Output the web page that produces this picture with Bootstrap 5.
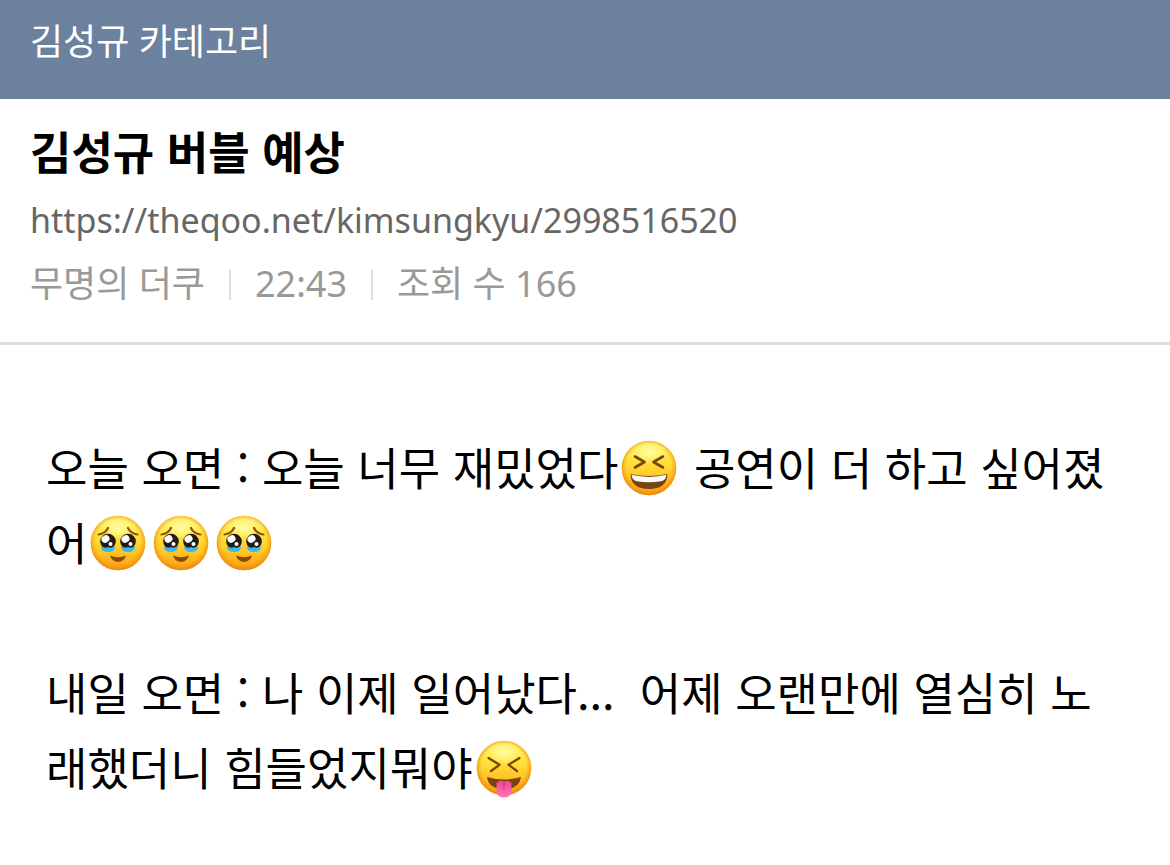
<!DOCTYPE html>
<html lang="ko">
<head>
<meta charset="utf-8">
<meta name="viewport" content="width=device-width, initial-scale=1">
<title>김성규 버블 예상</title>
<link href="https://cdn.jsdelivr.net/npm/bootstrap@5.3.0/dist/css/bootstrap.min.css" rel="stylesheet">
<style>
  body { font-family: "Noto Sans", "Noto Sans CJK KR", sans-serif; color: #000; background: #fff; }
  .board-bar { background: #6b819e; padding: 12px 30px 27px; }
  .board-bar a { font-size: 36px; line-height: 60px; color: #fff; }
  .post-head { padding: 22px 30px 28px; border-bottom: 3px solid #ddd; }
  .post-title, .post-body { font-family: "Noto Sans CJK KR", sans-serif; font-size: 45px; }
  .post-title { line-height: 60px; font-weight: 700; }
  .post-url { font-size: 34px; line-height: 60px; margin-top: 9px; }
  .post-url a { color: #666; }
  .post-meta { font-size: 36px; line-height: 60px; margin-top: 4px; color: #999; }
  .post-meta li + li::before { content: ""; display: inline-block; width: 2px; height: 30px; margin: 0 24px; background: #ddd; vertical-align: -3px; }
  .post-body { padding: 84px 46px 40px; line-height: 75px; word-break: break-all; }
  .post-body p { margin-bottom: 75px; }
  .emo { width: 57px; height: 58px; margin: 0 3px; vertical-align: -12px; }
</style>
</head>
<body>
<svg width="0" height="0" class="position-absolute" aria-hidden="true">
  <defs>
    <linearGradient id="skin" x1="0" y1="0" x2="0" y2="1">
      <stop offset="0" stop-color="#fff27a"/><stop offset=".3" stop-color="#ffe845"/><stop offset=".65" stop-color="#ffc727"/><stop offset="1" stop-color="#fd9a12"/>
    </linearGradient>
    <radialGradient id="rim" cx=".5" cy=".48" r=".52">
      <stop offset=".78" stop-color="#f29a12" stop-opacity="0"/><stop offset="1" stop-color="#e9830f" stop-opacity=".85"/>
    </radialGradient>
    <radialGradient id="shine" cx=".5" cy=".5" r=".5">
      <stop offset="0" stop-color="#ffffb4" stop-opacity=".9"/><stop offset="1" stop-color="#ffff90" stop-opacity="0"/>
    </radialGradient>
    <linearGradient id="tongue" x1="0" y1="0" x2="0" y2="1">
      <stop offset="0" stop-color="#f0468f"/><stop offset="1" stop-color="#ff78b4"/>
    </linearGradient>
    <symbol id="face" viewBox="0 0 57 58">
      <circle cx="28" cy="28" r="27.3" fill="url(#skin)"/>
      <ellipse cx="28" cy="13" rx="19" ry="12" fill="url(#shine)"/>
      <circle cx="28" cy="28" r="27.3" fill="url(#rim)"/>
    </symbol>
    <symbol id="grin" viewBox="0 0 57 58">
      <use href="#face" width="57" height="58"/>
      <path d="M14 16.5 L23.5 22 L14 27.5 M42 16.5 L32.5 22 L42 27.5" fill="none" stroke="#7a4508" stroke-width="2.6" stroke-linecap="round" stroke-linejoin="round"/>
      <path d="M9.5 34 Q28 38 46.500 34 Q46 49 28 49 Q10 49 9.500 34Z" fill="#774311"/>
      <path d="M10.5 34.8 Q28 39 45.500 34.8 Q45 40.500 40 41.300 Q28 43 16 41.300 Q11 40.500 10.500 34.8Z" fill="#f7f8fb"/>
    </symbol>
    <symbol id="tearful" viewBox="0 0 57 58">
      <use href="#face" width="57" height="58"/>
      <path d="M8.5 19.5 Q15.500 18.500 18 13 M38 13 Q40.500 18.500 47.500 19.500" fill="none" stroke="#94530c" stroke-width="2.2" stroke-linecap="round"/>
      <path d="M11 31 Q14 34 18 32.500 Q22 34 25 31 Q25 37 18 37 Q11 37 11 31Z M31 31 Q34 34 38 32.500 Q42 34 45 31 Q45 37 38 37 Q31 37 31 31Z" fill="#36b9f0"/>
      <circle cx="18" cy="26.5" r="7.8" fill="#241b19"/><circle cx="38" cy="26.5" r="7.8" fill="#241b19"/>
      <path d="M12 31.5 Q15 33.500 18 32 Q21 33.500 24 31.500 Q22 36 18 36 Q14 36 12 31.500Z M32 31.500 Q35 33.500 38 32 Q41 33.500 44 31.500 Q42 36 38 36 Q34 36 32 31.500Z" fill="#36b9f0"/>
      <g fill="#fff"><ellipse cx="15.5" cy="24" rx="4.2" ry="3.500" transform="rotate(-30 15.5 24)"/><ellipse cx="35.5" cy="24" rx="4.2" ry="3.500" transform="rotate(-30 35.5 24)"/><circle cx="20.5" cy="29" r="2"/><circle cx="40.5" cy="29" r="2"/></g>
      <path d="M20 40.5 Q28 44 36 40.500 Q34 47 28 47 Q22 47 20 40.500Z" fill="#8b4c0b"/>
    </symbol>
    <symbol id="squint" viewBox="0 0 57 58">
      <use href="#face" width="57" height="58"/>
      <path d="M12.5 18 L23.500 24.800 L15 31 M43.500 18 L32.500 24.800 L41 31" fill="none" stroke="#7a4508" stroke-width="2.2" stroke-linecap="round" stroke-linejoin="round"/>
      <path d="M11 37 Q28 42 45 37 Q43.500 49 28 49 Q12.500 49 11 37Z" fill="#774311"/>
      <path d="M20.5 43 Q24 39.500 28 41.500 Q32 39.500 35.500 43 V50 Q35.500 57.500 28 57.500 Q20.500 57.500 20.500 50Z" fill="url(#tongue)"/>
      <path d="M28 43 V49" stroke="#d92d79" stroke-width="1.2" stroke-linecap="round"/>
    </symbol>
  </defs>
</svg>

<header class="board-bar"><a href="#" class="d-block text-decoration-none">김성규 카테고리</a></header>
<main>
  <article>
    <div class="post-head">
      <h1 class="post-title mb-0">김성규 버블 예상</h1>
      <div class="post-url"><a href="https://theqoo.net/kimsungkyu/2998516520" class="text-decoration-none">https://theqoo.net/kimsungkyu/2998516520</a></div>
      <ul class="post-meta list-unstyled d-flex flex-wrap mb-0">
        <li>무명의 더쿠</li><li>22:43</li><li>조회 수 166</li>
      </ul>
    </div>
    <div class="post-body">
      <p>오늘 오면 : 오늘 너무 재밌었다<svg class="emo" role="img" aria-label="웃음"><use href="#grin"/></svg> 공연이 더 하고 싶어졌어<svg class="emo" role="img" aria-label="울먹"><use href="#tearful"/></svg><svg class="emo" role="img" aria-label="울먹"><use href="#tearful"/></svg><svg class="emo" role="img" aria-label="울먹"><use href="#tearful"/></svg></p>
      <p class="mb-0">내일 오면 : 나 이제 일어났다...&nbsp; 어제 오랜만에 열심히 노래했더니 힘들었지뭐야<svg class="emo" role="img" aria-label="메롱"><use href="#squint"/></svg></p>
    </div>
  </article>
</main>
<script src="https://cdn.jsdelivr.net/npm/bootstrap@5.3.0/dist/js/bootstrap.bundle.min.js"></script>
</body>
</html>
